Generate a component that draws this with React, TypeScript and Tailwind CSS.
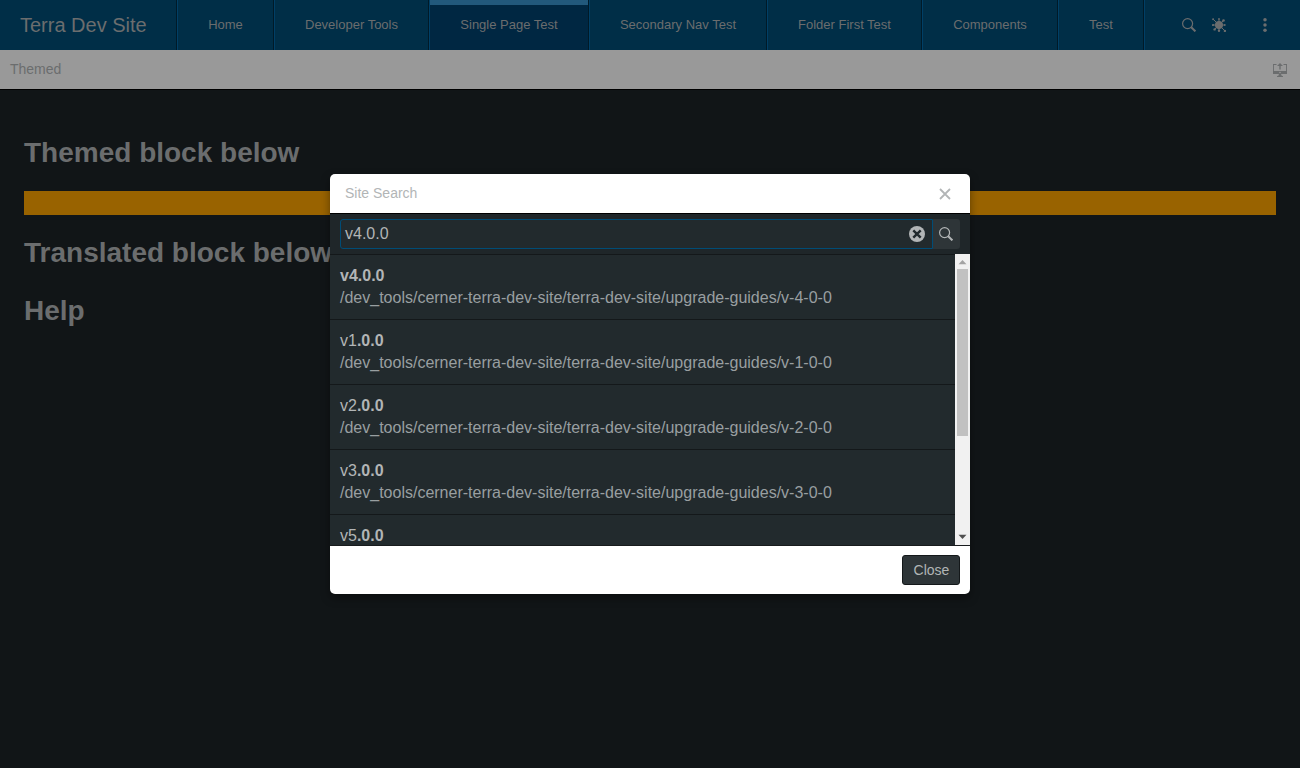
import React from 'react';

const tabs = [
  { name: 'Home', width: 'w-[97px]' },
  { name: 'Developer Tools', width: 'w-[155px]' },
  { name: 'Single Page Test', width: 'w-[160px]', active: true },
  { name: 'Secondary Nav Test', width: 'w-[178px]' },
  { name: 'Folder First Test', width: 'w-[155px]' },
  { name: 'Components', width: 'w-[136px]' },
  { name: 'Test', width: 'w-[86px]' },
];

const results = [
  { plain: '', bold: 'v4.0.0', version: '4' },
  { plain: 'v1', bold: '.0.0', version: '1' },
  { plain: 'v2', bold: '.0.0', version: '2' },
  { plain: 'v3', bold: '.0.0', version: '3' },
  { plain: 'v5', bold: '.0.0', version: '5' },
];

function SearchIcon() {
  return (
    <svg width="14" height="14" viewBox="0 0 14 14" fill="none" stroke="currentColor">
      <circle cx="5.6" cy="5.6" r="5" strokeWidth="1.2" />
      <path d="M9.2 9.2L13.4 13.4" strokeWidth="2" />
    </svg>
  );
}

function ThemeIcon() {
  return (
    <svg width="14" height="14" viewBox="0 0 14 14" fill="currentColor" stroke="currentColor">
      <circle cx="7" cy="7" r="4" stroke="none" />
      <path d="M7 1V13M1 7H13M1.2 1.2L12.8 12.8M11.7 2.3L2.3 11.7" strokeWidth="1" />
      <g stroke="none">
        <circle cx="7" cy="0.9" r="0.9" />
        <circle cx="7" cy="12.8" r="1.2" />
        <circle cx="1" cy="7" r="1.1" />
        <circle cx="12.8" cy="7" r="0.9" />
        <circle cx="1.1" cy="1.2" r="1" />
        <circle cx="12.9" cy="12.9" r="1.2" />
        <circle cx="11.5" cy="2.5" r="1.3" />
        <circle cx="2.6" cy="11.4" r="1.2" />
      </g>
    </svg>
  );
}

function KebabIcon() {
  return (
    <svg width="4" height="14" viewBox="0 0 4 14" fill="currentColor">
      <circle cx="2" cy="1.8" r="1.75" />
      <circle cx="2" cy="7" r="1.75" />
      <circle cx="2" cy="12.2" r="1.75" />
    </svg>
  );
}

function MonitorUpIcon() {
  return (
    <svg width="14" height="14" viewBox="0 0 14 14" fill="currentColor">
      <path d="M0 1h3.5v.9H.9V8h12.2V1.9h-2.6V1H14v10H0z" />
      <path d="M7 0L10 3H7.7V6.5H6.3V3H4z" />
      <path d="M5.8 11h2.4v1.2L10 13.2v.8H4v-.8l1.8-1z" />
      <circle cx="7" cy="9.5" r=".8" fill="#999" />
    </svg>
  );
}

function Header() {
  return (
    <header className="flex h-[50px] bg-[#002e47] text-[#6b6d6e]">
      <div className="flex w-[177px] shrink-0 items-center border-r border-[#001a28] pl-5 text-[20px]">Terra Dev Site</div>
      <nav className="flex shrink-0 text-[13px]">
        {tabs.map((tab) => (
          <div
            key={tab.name}
            className={`relative flex ${tab.width} shrink-0 items-center justify-center whitespace-nowrap border-r border-l border-r-[#001a28] border-l-[#003f66] ${tab.active ? 'bg-[#002742]' : ''}`}
          >
            {tab.active && <div className="absolute inset-x-0 top-0 h-[5px] bg-[#22597c]" />}
            {tab.name}
          </div>
        ))}
      </nav>
      <div className="flex flex-1 items-center justify-end border-l border-[#003f66] pr-[33px]">
        <SearchIcon />
        <div className="ml-4"><ThemeIcon /></div>
        <div className="ml-[37px]"><KebabIcon /></div>
      </div>
    </header>
  );
}

function Result({ plain, bold, version }: { plain: string; bold: string; version: string }) {
  return (
    <li className="h-[65px] border-b border-[#14181a] px-[10px] pt-[10px] leading-[22px]">
      <div className="text-[#b2b5b6]">{plain}<b>{bold}</b></div>
      <div className="text-[#999fa1]">{`/dev_tools/cerner-terra-dev-site/terra-dev-site/upgrade-guides/v-${version}-0-0`}</div>
    </li>
  );
}

function Scrollbar() {
  return (
    <div className="flex w-[15px] flex-col items-center bg-[#f1f1f1]">
      <svg width="15" height="15" viewBox="0 0 15 15"><path d="M3.5 10.3h8L7.5 6z" fill="#a3a3a3" /></svg>
      <div className="ml-[2px] h-[167px] w-[11px] self-start bg-[#c1c1c1]" />
      <svg className="mt-auto" width="15" height="15" viewBox="0 0 15 15"><path d="M3.5 4.7h8L7.5 9z" fill="#505050" /></svg>
    </div>
  );
}

function SearchDialog() {
  return (
    <div role="dialog" className="flex h-[420px] w-[640px] flex-col overflow-hidden rounded-[5px] bg-white shadow-[0_4px_10px_rgba(0,0,0,0.4)]">
      <div className="flex h-[39px] shrink-0 items-center justify-between pr-[19px] pl-[15px] text-[14px] text-[#b2b5b6]">
        Site Search
        <svg className="mt-px" width="12" height="12" viewBox="0 0 12 12" stroke="currentColor" strokeWidth="1.8"><path d="M1 1L11 11M11 1L1 11" /></svg>
      </div>
      <div className="flex h-[41px] shrink-0 border-t border-t-black bg-[#1f2629] px-[10px] pt-[5px]">
        <div className="flex h-[30px] flex-1 items-center justify-between rounded-l-[3px] border border-[#004c76] bg-[#222a2d] pr-[7px] pl-1 text-[16px] text-[#b2b5b6]">
          <span>v4.0.0</span>
          <svg width="16" height="16" viewBox="0 0 16 16"><circle cx="8" cy="8" r="8" fill="#b2b5b6" /><path d="M4.3 4.3L11.7 11.7M11.7 4.3L4.3 11.7" stroke="#222a2d" strokeWidth="2.4" /></svg>
        </div>
        <div className="flex h-[30px] w-[27px] items-center rounded-r-[3px] bg-[#2e3538] pl-[6px] text-[#b2b5b6]"><SearchIcon /></div>
      </div>
      <div className="flex h-[291px] shrink-0 overflow-hidden bg-[#222a2d]">
        <ul className="h-full flex-1 overflow-hidden border-t border-[#14181a] text-[16px]">
          {results.map((r) => <Result key={r.version} {...r} />)}
        </ul>
        <Scrollbar />
      </div>
      <div className="flex flex-1 items-center justify-end border-t border-[#181b1d] pr-[10px]">
        <button className="h-[30px] w-[58px] rounded-[3px] border border-[#14181a] bg-[#2e3538] pl-px text-[14px] text-[#b2b5b6]">Close</button>
      </div>
    </div>
  );
}

export default function App() {
  return (
    <div className="relative h-[768px] w-[1300px] overflow-hidden bg-[#111517] font-['Liberation_Sans',Arial,sans-serif]">
      <Header />
      <div className="flex h-[40px] items-center justify-between border-b border-black bg-[#999] pr-[13px] pl-[10px] text-[14px] text-[#6b6d6e]">
        <span>Themed</span>
        <MonitorUpIcon />
      </div>
      <main className="px-6 pt-[46px] text-[28px] leading-[34px] font-bold text-[#6b6d6e]">
        <h1>Themed block below</h1>
        <div className="mt-[21px] h-6 bg-[#996300]" />
        <h1 className="mt-[21px]">Translated block below</h1>
        <h1 className="mt-6">Help</h1>
      </main>
      <div className="absolute inset-0 flex items-center justify-center"><SearchDialog /></div>
    </div>
  );
}
